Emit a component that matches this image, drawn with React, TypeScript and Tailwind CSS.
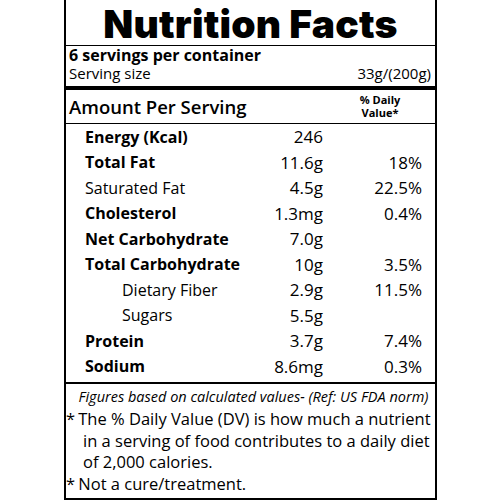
import React from 'react';

type Row = {
  label: string;
  value: string;
  pct?: string;
  bold?: boolean;
  indent?: boolean;
};

const rows: Row[] = [
  { label: 'Energy (Kcal)', value: '246', bold: true },
  { label: 'Total Fat', value: '11.6g', pct: '18%', bold: true },
  { label: 'Saturated Fat', value: '4.5g', pct: '22.5%' },
  { label: 'Cholesterol', value: '1.3mg', pct: '0.4%', bold: true },
  { label: 'Net Carbohydrate', value: '7.0g', bold: true },
  { label: 'Total Carbohydrate', value: '10g', pct: '3.5%', bold: true },
  { label: 'Dietary Fiber', value: '2.9g', pct: '11.5%', indent: true },
  { label: 'Sugars', value: '5.5g', indent: true },
  { label: 'Protein', value: '3.7g', pct: '7.4%', bold: true },
  { label: 'Sodium', value: '8.6mg', pct: '0.3%', bold: true },
];

const App = () => {
  return (
    <div className="w-[500px] h-[500px] bg-white text-black font-['Open_Sans',sans-serif]">
      <div className="ml-[64px] w-[373px] h-[500px] border-x-2 border-b-2 border-black flex flex-col">
        <div className="h-[45px] flex items-center justify-center">
          <h1 className="font-['Inter',sans-serif] font-black text-[39px] leading-[42px] tracking-[0.2px] mt-[2px]">
            Nutrition Facts
          </h1>
        </div>

        <div className="border-t-[1.5px] border-black px-[3px] h-[41px] flex flex-col">
          <p className="font-bold text-[16px] leading-[18px]">6 servings per container</p>
          <div className="flex justify-between text-[15px] leading-[18px] font-medium">
            <span>Serving size</span>
            <span className="pr-[1px]">33g/(200g)</span>
          </div>
        </div>

        <div className="border-t-4 border-black h-[37px] flex items-center justify-between pl-[3px]">
          <span className="text-[18.5px] font-semibold">Amount Per Serving</span>
          <p className="w-[56px] text-center text-[11px] font-bold leading-[12.5px] mr-[27px]">
            % Daily Value*
          </p>
        </div>

        <div className="border-t-[1.5px] border-black pl-[19px] flex flex-col">
          {rows.map((r) => (
            <div key={r.label} className="flex items-center h-[25.5px] text-[16px]">
              <span
                className={
                  'w-[170px] whitespace-nowrap ' +
                  (r.bold ? 'font-bold ' : 'font-normal ') +
                  (r.indent ? 'pl-[37px]' : '')
                }
              >
                {r.label}
              </span>
              <span className="w-[68px] text-right text-[17px]">{r.value}</span>
              <span className="w-[99px] text-right text-[17px]">{r.pct}</span>
            </div>
          ))}
        </div>

        <div className="mt-[3px] border-t-2 border-black pt-[2px]">
          <p className="text-center italic text-[14.5px] leading-[22px] pl-[6px] whitespace-nowrap">
            Figures based on calculated values- (Ref: US FDA norm)
          </p>
          <div className="text-[16.5px] leading-[21.7px] whitespace-nowrap">
            <p>
              <span className="inline-block w-[8px] text-center">*</span> The % Daily Value (DV) is how much a nutrient
            </p>
            <p className="pl-[17px]">in a serving of food contributes to a daily diet</p>
            <p className="pl-[17px]">of 2,000 calories.</p>
            <p>
              <span className="inline-block w-[8px] text-center">*</span> Not a cure/treatment.
            </p>
          </div>
        </div>
      </div>
    </div>
  );
};

export default App;
